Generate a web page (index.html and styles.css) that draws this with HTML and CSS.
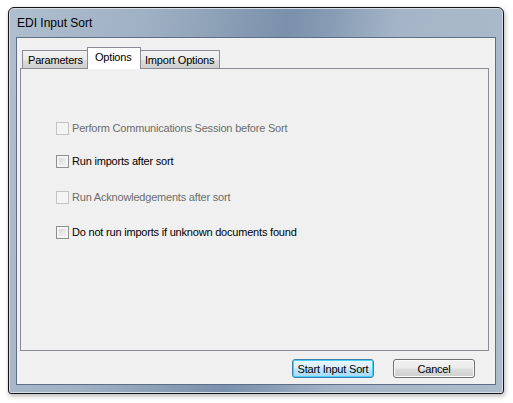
FILE: index.html
```html
<!DOCTYPE html>
<html>
<head>
<meta charset="utf-8">
<link rel="stylesheet" href="styles.css">
</head>
<body>
<div class="window">
  <div class="titlebar"><span class="title">EDI Input Sort</span></div>
  <div class="client">
    <div class="tabs">
      <div class="tab">Parameters</div>
      <div class="tab active">Options</div>
      <div class="tab">Import Options</div>
    </div>
    <div class="pane">
      <div class="row disabled"><span class="cb"></span><span class="lbl">Perform Communications Session before Sort</span></div>
      <div class="row r2"><span class="cb"></span><span class="lbl">Run imports after sort</span></div>
      <div class="row disabled r3"><span class="cb"></span><span class="lbl">Run Acknowledgements after sort</span></div>
      <div class="row r4"><span class="cb"></span><span class="lbl">Do not run imports if unknown documents found</span></div>
    </div>
    <div class="buttons">
      <button class="btn default">Start Input Sort</button>
      <button class="btn">Cancel</button>
    </div>
  </div>
</div>
</body>
</html>
```
FILE: styles.css
```css
html, body {
  margin: 0;
  padding: 0;
  background: #ffffff;
}
body {
  width: 513px;
  height: 403px;
  overflow: hidden;
  font-family: "Liberation Sans", Arial, sans-serif;
  font-size: 11px;
  letter-spacing: -0.2px;
  color: #000;
}
.window {
  margin: 7px 0 0 8px;
  width: 496px;
  height: 387px;
  box-sizing: border-box;
  border: 1px solid #151515;
  border-radius: 6px 6px 3px 3px;
  box-shadow: 1px 2px 5px rgba(0,0,0,0.3), inset 0 0 0 1px #d5dee8;
  background: linear-gradient(100deg, #b0bfcf 0%, #9fb0c3 25%, #7a91ab 50%, #889db5 58%, #a5b5c7 70%, #adbccb 100%);
  padding: 0 7px 8px 7px;
  display: flex;
  flex-direction: column;
}
.titlebar {
  height: 29px;
  display: flex;
  align-items: center;
  padding-left: 1px;
  flex: none;
}
.title {
  font-size: 12px;
  letter-spacing: 0;
  color: #000;
  padding-top: 1px;
}
.client {
  flex: 1;
  background: #f0f0f0;
  border: 1px solid #5d7088;
  box-sizing: border-box;
  padding: 9px 6px 0 3px;
  display: flex;
  flex-direction: column;
}
.tabs {
  display: flex;
  align-items: flex-end;
  height: 21px;
  padding-left: 2px;
  position: relative;
  z-index: 1;
}
.tab {
  height: 18px;
  box-sizing: border-box;
  border: 1px solid #898c95;
  border-bottom: none;
  background: linear-gradient(#f2f2f2 0%, #ebebeb 50%, #dddddd 51%, #cfcfcf 100%);
  padding: 3px 0 0 5px;
  margin-right: -1px;
  white-space: nowrap;
}
.tab:nth-child(1) { width: 66px; }
.tab:nth-child(3) { width: 80px; padding-left: 4px; }
.tab.active {
  height: 22px;
  width: 54px;
  background: #ffffff;
  padding: 3px 0 0 7px;
  margin-bottom: -1px;
  position: relative;
  z-index: 2;
}
.pane {
  height: 283px;
  box-sizing: border-box;
  border: 1px solid #898c95;
  background: #f0f0f0;
  padding: 53px 0 0 35px;
}
.row {
  display: flex;
  align-items: center;
  height: 13px;
}
.r2 { margin-top: 20px; }
.r3 { margin-top: 23px; }
.r4 { margin-top: 22px; }
.cb {
  width: 13px;
  height: 13px;
  box-sizing: border-box;
  border: 1px solid #8e8f8f;
  background: linear-gradient(135deg, #cbcfd5 0%, #e4e6e9 50%, #f6f6f6 100%);
  box-shadow: inset 0 0 0 2px #f4f4f4;
  flex: none;
}
.lbl {
  margin-left: 3px;
  margin-top: -2px;
  white-space: nowrap;
}
.row.disabled .cb {
  border-color: #c4c4c4;
  background: #f4f4f4;
  box-shadow: none;
}
.row.disabled .lbl {
  color: #6d6d6d;
}
.buttons {
  display: flex;
  justify-content: flex-end;
  gap: 19px;
  margin-top: 8px;
  padding-right: 14px;
}
.btn {
  width: 82px;
  height: 19px;
  margin: 0;
  padding: 0;
  font-family: "Liberation Sans", Arial, sans-serif;
  font-size: 11px;
  letter-spacing: -0.2px;
  color: #000;
  border: 1px solid #707070;
  border-radius: 3px;
  background: linear-gradient(#f2f2f2 0%, #ebebeb 48%, #dddddd 52%, #cfcfcf 100%);
  box-shadow: inset 0 0 0 1px #fcfcfc;
}
.btn.default {
  border-color: #3c7fb1;
  background: linear-gradient(#eaf6fd 0%, #d9f0fc 48%, #bee6fd 52%, #a7d9f5 100%);
  box-shadow: inset 0 0 0 1px #48d1fa;
}
```
